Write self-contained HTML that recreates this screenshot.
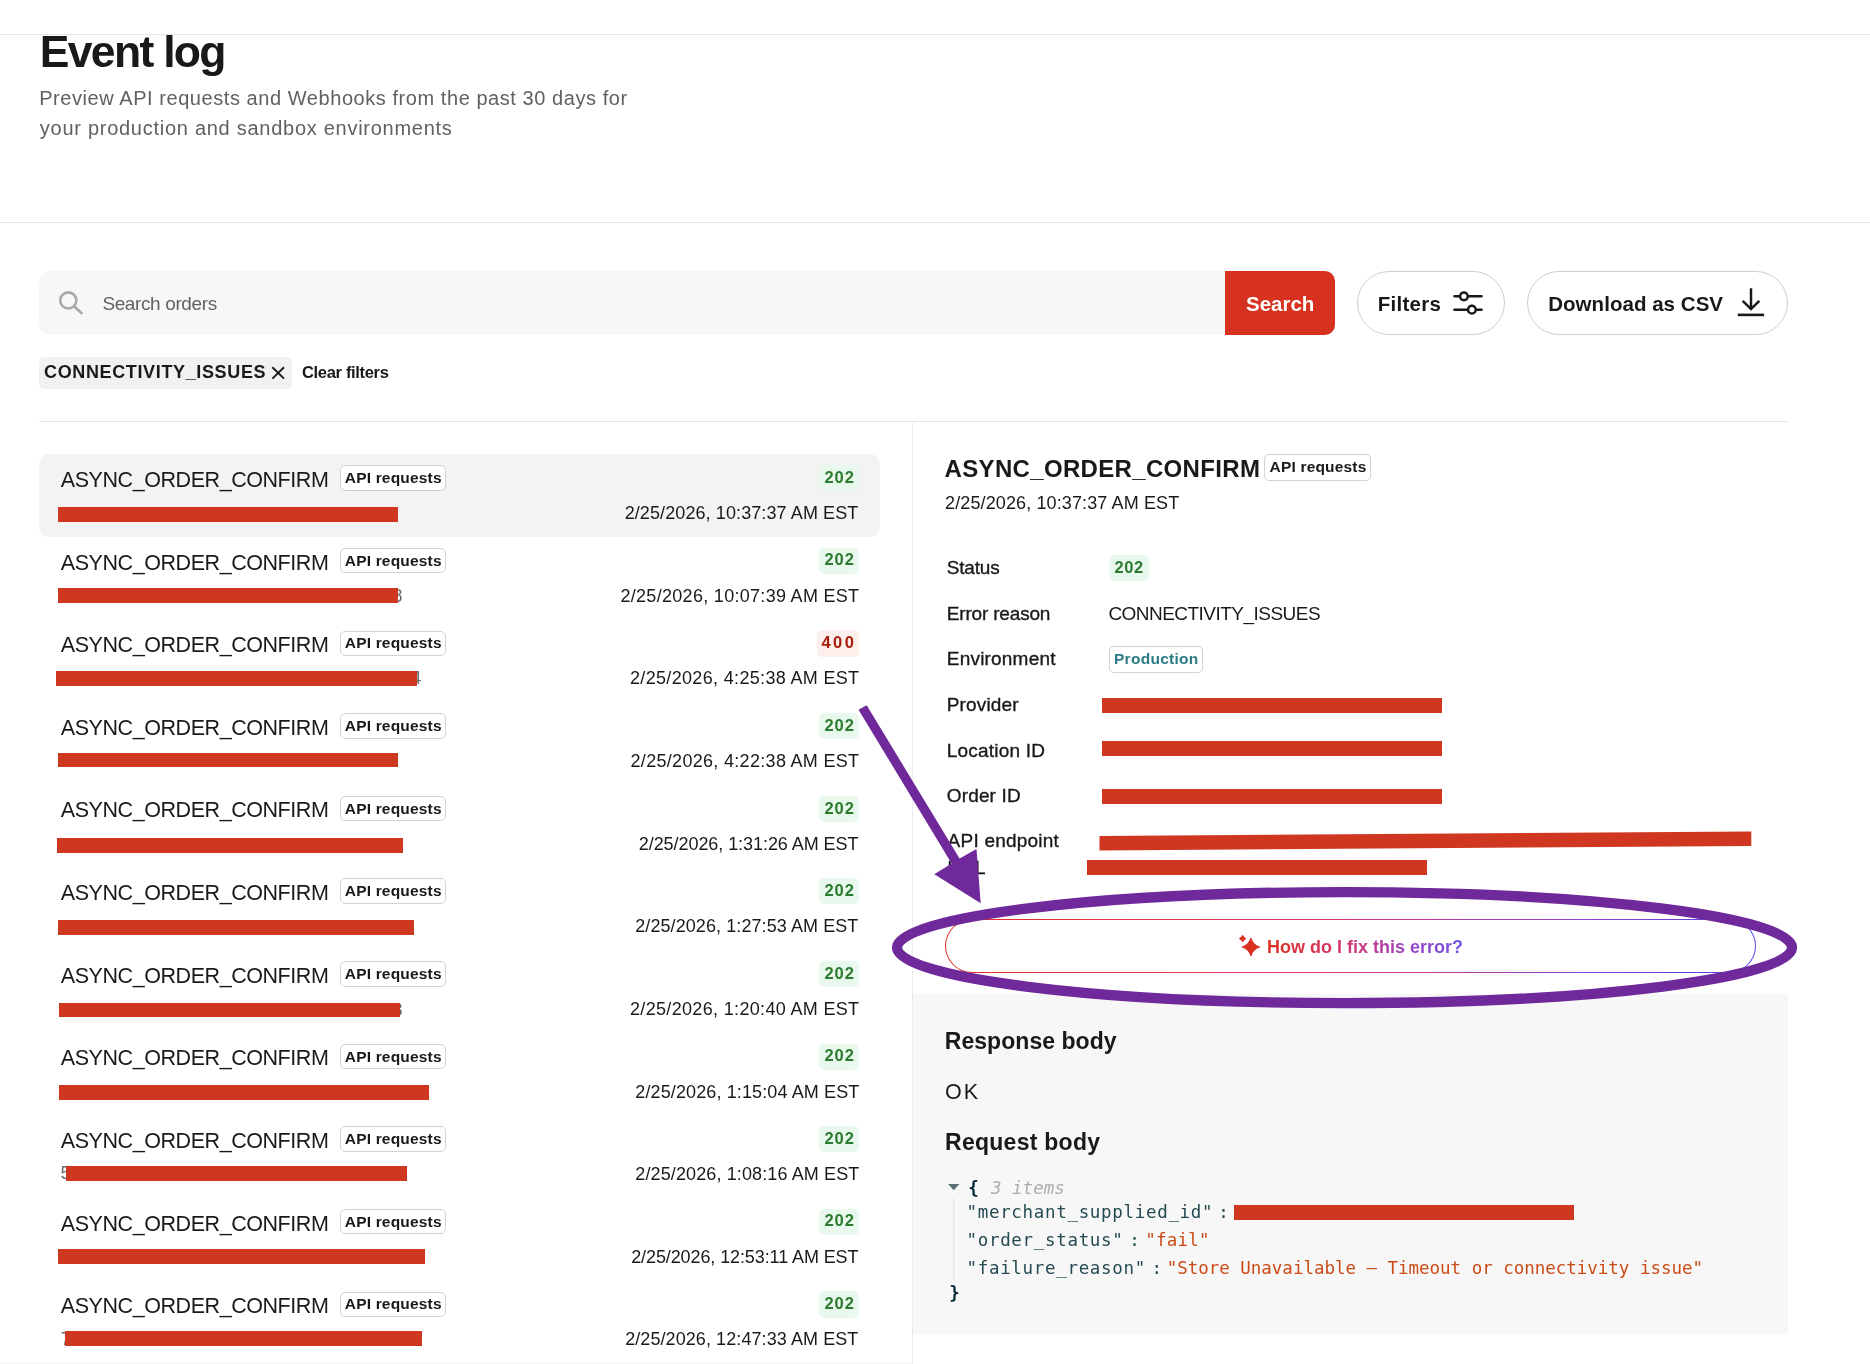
<!DOCTYPE html>
<html lang="en"><head><meta charset="utf-8"><title>Event log</title>
<style>
html,body{margin:0;padding:0;background:#fff;}
body{width:1870px;height:1364px;position:relative;overflow:hidden;font-family:"Liberation Sans", sans-serif;color:#191919;}
#pg{position:absolute;left:0;top:0;width:1870px;height:1364px;will-change:transform;}
.b{position:absolute;}
.t{position:absolute;white-space:nowrap;line-height:1;}
.m{position:absolute;white-space:pre;line-height:1;font-family:"DejaVu Sans Mono", "Liberation Mono", monospace;font-size:17.5px;}
svg{position:absolute;overflow:visible;}
</style></head><body><div id="pg">
<div class="t" style="right:1467.4px;top:586.6px;font-size:18.5px;color:#6b6b6b;">8</div>
<div class="t" style="right:1448.8px;top:669.3px;font-size:18.5px;color:#6b6b6b;">4</div>
<div class="t" style="right:1467.4px;top:1000.6px;font-size:18.5px;color:#6b6b6b;">8</div>
<div class="t" style="left:60.6px;top:1164.3px;font-size:18.5px;color:#6b6b6b;">5</div>
<div class="t" style="left:60.8px;top:1329.9px;font-size:18.5px;color:#6b6b6b;">7</div>
<div class="b" style="left:0.0px;top:34.0px;width:1870.0px;height:1.0px;background:#e7e7e7;"></div>
<div class="b" style="left:0.0px;top:222.0px;width:1870.0px;height:1.0px;background:#e4e4e4;"></div>
<div class="b" style="left:39.0px;top:421.0px;width:1749.0px;height:1.0px;background:#e4e4e4;"></div>
<div class="b" style="left:912.0px;top:421.0px;width:1.0px;height:943.0px;background:#ebebeb;"></div>
<div class="b" style="left:0.0px;top:1361.0px;width:912.0px;height:3.0px;background:linear-gradient(180deg,#ffffff 0%,#f4f4f4 100%);"></div>
<div class="b" style="left:39.0px;top:271.0px;width:1193.0px;height:64.0px;background:#f7f7f7;border-radius:10px 0 0 10px;"></div>
<div class="b" style="left:1225.0px;top:271.0px;width:110.0px;height:64.0px;background:#d6321f;border-radius:0 10px 10px 0;"></div>
<div class="b" style="left:1357.0px;top:271.0px;width:148.0px;height:64.0px;background:#fff;border:1px solid #cecece;box-sizing:border-box;border-radius:32px;"></div>
<div class="b" style="left:1527.0px;top:271.0px;width:261.0px;height:64.0px;background:#fff;border:1px solid #cecece;box-sizing:border-box;border-radius:32px;"></div>
<div class="b" style="left:39.0px;top:357.2px;width:253.0px;height:31.8px;background:#f1f1f1;border-radius:5px;"></div>
<div class="b" style="left:39.0px;top:454.2px;width:841.0px;height:82.5px;background:#f3f3f3;border-radius:10px;"></div>
<div class="b" style="left:340.3px;top:465.2px;width:105.3px;height:25.5px;background:#fff;border:1px solid #d2d2d2;box-sizing:border-box;border-radius:5px;"></div>
<div class="b" style="left:819.2px;top:465.1px;width:39.6px;height:26.2px;background:#e9f8ec;border-radius:5px;"></div>
<div class="b" style="left:58.0px;top:507.0px;width:340.0px;height:14.9px;background:#cf3721;"></div>
<div class="b" style="left:340.3px;top:547.8px;width:105.3px;height:25.5px;background:#fff;border:1px solid #d2d2d2;box-sizing:border-box;border-radius:5px;"></div>
<div class="b" style="left:819.2px;top:547.7px;width:39.6px;height:26.2px;background:#e9f8ec;border-radius:5px;"></div>
<div class="b" style="left:58.0px;top:588.2px;width:340.0px;height:14.6px;background:#cf3721;"></div>
<div class="b" style="left:340.3px;top:630.5px;width:105.3px;height:25.5px;background:#fff;border:1px solid #d2d2d2;box-sizing:border-box;border-radius:5px;"></div>
<div class="b" style="left:817.0px;top:630.4px;width:41.8px;height:26.2px;background:#fdefec;border-radius:5px;"></div>
<div class="b" style="left:56.0px;top:671.0px;width:361.3px;height:14.5px;background:#cf3721;"></div>
<div class="b" style="left:340.3px;top:713.1px;width:105.3px;height:25.5px;background:#fff;border:1px solid #d2d2d2;box-sizing:border-box;border-radius:5px;"></div>
<div class="b" style="left:819.2px;top:713.0px;width:39.6px;height:26.2px;background:#e9f8ec;border-radius:5px;"></div>
<div class="b" style="left:58.0px;top:752.5px;width:340.0px;height:14.0px;background:#cf3721;"></div>
<div class="b" style="left:340.3px;top:795.7px;width:105.3px;height:25.5px;background:#fff;border:1px solid #d2d2d2;box-sizing:border-box;border-radius:5px;"></div>
<div class="b" style="left:819.2px;top:795.6px;width:39.6px;height:26.2px;background:#e9f8ec;border-radius:5px;"></div>
<div class="b" style="left:57.0px;top:838.0px;width:345.5px;height:14.5px;background:#cf3721;"></div>
<div class="b" style="left:340.3px;top:878.3px;width:105.3px;height:25.5px;background:#fff;border:1px solid #d2d2d2;box-sizing:border-box;border-radius:5px;"></div>
<div class="b" style="left:819.2px;top:878.2px;width:39.6px;height:26.2px;background:#e9f8ec;border-radius:5px;"></div>
<div class="b" style="left:57.5px;top:920.0px;width:356.5px;height:15.0px;background:#cf3721;"></div>
<div class="b" style="left:340.3px;top:961.0px;width:105.3px;height:25.5px;background:#fff;border:1px solid #d2d2d2;box-sizing:border-box;border-radius:5px;"></div>
<div class="b" style="left:819.2px;top:960.9px;width:39.6px;height:26.2px;background:#e9f8ec;border-radius:5px;"></div>
<div class="b" style="left:59.0px;top:1002.5px;width:340.5px;height:14.0px;background:#cf3721;"></div>
<div class="b" style="left:340.3px;top:1043.6px;width:105.3px;height:25.5px;background:#fff;border:1px solid #d2d2d2;box-sizing:border-box;border-radius:5px;"></div>
<div class="b" style="left:819.2px;top:1043.5px;width:39.6px;height:26.2px;background:#e9f8ec;border-radius:5px;"></div>
<div class="b" style="left:58.5px;top:1085.0px;width:370.5px;height:15.0px;background:#cf3721;"></div>
<div class="b" style="left:340.3px;top:1126.2px;width:105.3px;height:25.5px;background:#fff;border:1px solid #d2d2d2;box-sizing:border-box;border-radius:5px;"></div>
<div class="b" style="left:819.2px;top:1126.1px;width:39.6px;height:26.2px;background:#e9f8ec;border-radius:5px;"></div>
<div class="b" style="left:66.0px;top:1166.0px;width:340.5px;height:14.5px;background:#cf3721;"></div>
<div class="b" style="left:340.3px;top:1208.9px;width:105.3px;height:25.5px;background:#fff;border:1px solid #d2d2d2;box-sizing:border-box;border-radius:5px;"></div>
<div class="b" style="left:819.2px;top:1208.8px;width:39.6px;height:26.2px;background:#e9f8ec;border-radius:5px;"></div>
<div class="b" style="left:57.5px;top:1248.6px;width:367.0px;height:15.6px;background:#cf3721;"></div>
<div class="b" style="left:340.3px;top:1291.5px;width:105.3px;height:25.5px;background:#fff;border:1px solid #d2d2d2;box-sizing:border-box;border-radius:5px;"></div>
<div class="b" style="left:819.2px;top:1291.4px;width:39.6px;height:26.2px;background:#e9f8ec;border-radius:5px;"></div>
<div class="b" style="left:64.5px;top:1331.0px;width:357.0px;height:14.5px;background:#cf3721;"></div>
<div class="b" style="left:1264.3px;top:454.2px;width:106.6px;height:26.5px;background:#fff;border:1px solid #d2d2d2;box-sizing:border-box;border-radius:5px;"></div>
<div class="b" style="left:1108.9px;top:555.1px;width:39.7px;height:25.6px;background:#e9f8ec;border-radius:5px;"></div>
<div class="b" style="left:1109.2px;top:646.3px;width:93.5px;height:26.4px;background:#fff;border:1px solid #d2d2d2;box-sizing:border-box;border-radius:5px;"></div>
<div class="b" style="left:1101.9px;top:698.1px;width:340.1px;height:14.8px;background:#cf3721;"></div>
<div class="b" style="left:1101.9px;top:741.2px;width:340.1px;height:14.8px;background:#cf3721;"></div>
<div class="b" style="left:1101.9px;top:789.1px;width:340.1px;height:14.8px;background:#cf3721;"></div>
<div class="b" style="left:1087.0px;top:860.3px;width:340.0px;height:14.6px;background:#cf3721;"></div>
<div class="b" style="left:913.0px;top:994.0px;width:874.6px;height:339.7px;background:#f7f7f7;"></div>
<div class="t" id="t0" style="top:29.95px;font-size:44.5px;left:39.80px;font-weight:700;letter-spacing:-1.69px;">Event log</div>
<div class="t" id="t1" style="top:88.07px;font-size:20.0px;left:39.20px;color:#606060;letter-spacing:0.56px;">Preview API requests and Webhooks from the past 30 days for</div>
<div class="t" id="t2" style="top:118.07px;font-size:20.0px;left:39.80px;color:#606060;letter-spacing:0.73px;">your production and sandbox environments</div>
<div class="t" id="t3" style="top:294.22px;font-size:19.0px;left:102.40px;color:#626262;letter-spacing:-0.38px;">Search orders</div>
<div class="t" id="t4" style="top:293.65px;font-size:20.5px;left:1246.00px;font-weight:700;color:#fff;">Search</div>
<div class="t" id="t5" style="top:293.65px;font-size:20.5px;left:1377.80px;font-weight:700;letter-spacing:0.25px;">Filters</div>
<div class="t" id="t6" style="top:293.65px;font-size:20.5px;left:1548.20px;font-weight:700;letter-spacing:0.04px;">Download as CSV</div>
<div class="t" id="t7" style="top:362.96px;font-size:18.0px;left:44.00px;font-weight:700;letter-spacing:0.64px;">CONNECTIVITY_ISSUES</div>
<div class="t" id="t8" style="top:363.93px;font-size:16.5px;left:302.00px;font-weight:700;letter-spacing:-0.33px;">Clear filters</div>
<div class="t" id="t9" style="top:470.14px;font-size:21.5px;left:60.80px;letter-spacing:-0.44px;">ASYNC_ORDER_CONFIRM</div>
<div class="t" id="t10" style="top:469.98px;font-size:15.5px;left:344.80px;font-weight:700;letter-spacing:0.18px;">API requests</div>
<div class="t" id="t11" style="top:468.93px;font-size:16.5px;left:824.40px;font-weight:700;color:#2b7a2f;letter-spacing:1.00px;">202</div>
<div class="t" id="t12" style="top:504.06px;font-size:18px;right:1011.60px;letter-spacing:0.10px;">2/25/2026, 10:37:37 AM EST</div>
<div class="t" id="t13" style="top:552.65px;font-size:21.5px;left:60.80px;letter-spacing:-0.44px;">ASYNC_ORDER_CONFIRM</div>
<div class="t" id="t14" style="top:552.61px;font-size:15.5px;left:344.80px;font-weight:700;letter-spacing:0.18px;">API requests</div>
<div class="t" id="t15" style="top:551.28px;font-size:16.5px;left:824.40px;font-weight:700;color:#2b7a2f;letter-spacing:1.00px;">202</div>
<div class="t" id="t16" style="top:586.69px;font-size:18px;right:1010.60px;letter-spacing:0.30px;">2/25/2026, 10:07:39 AM EST</div>
<div class="t" id="t17" style="top:634.89px;font-size:21.5px;left:60.80px;letter-spacing:-0.44px;">ASYNC_ORDER_CONFIRM</div>
<div class="t" id="t18" style="top:635.08px;font-size:15.5px;left:344.80px;font-weight:700;letter-spacing:0.18px;">API requests</div>
<div class="t" id="t19" style="top:634.19px;font-size:16.5px;left:821.40px;font-weight:700;color:#a8200d;letter-spacing:2.50px;">400</div>
<div class="t" id="t20" style="top:669.16px;font-size:18px;right:1010.60px;letter-spacing:0.33px;">2/25/2026, 4:25:38 AM EST</div>
<div class="t" id="t21" style="top:717.85px;font-size:21.5px;left:60.80px;letter-spacing:-0.44px;">ASYNC_ORDER_CONFIRM</div>
<div class="t" id="t22" style="top:717.87px;font-size:15.5px;left:344.80px;font-weight:700;letter-spacing:0.18px;">API requests</div>
<div class="t" id="t23" style="top:716.82px;font-size:16.5px;left:824.40px;font-weight:700;color:#2b7a2f;letter-spacing:1.00px;">202</div>
<div class="t" id="t24" style="top:751.95px;font-size:18px;right:1010.60px;letter-spacing:0.31px;">2/25/2026, 4:22:38 AM EST</div>
<div class="t" id="t25" style="top:800.10px;font-size:21.5px;left:60.80px;letter-spacing:-0.44px;">ASYNC_ORDER_CONFIRM</div>
<div class="t" id="t26" style="top:800.58px;font-size:15.5px;left:344.80px;font-weight:700;letter-spacing:0.18px;">API requests</div>
<div class="t" id="t27" style="top:799.53px;font-size:16.5px;left:824.40px;font-weight:700;color:#2b7a2f;letter-spacing:1.00px;">202</div>
<div class="t" id="t28" style="top:834.58px;font-size:18px;right:1011.60px;letter-spacing:-0.06px;">2/25/2026, 1:31:26 AM EST</div>
<div class="t" id="t29" style="top:882.69px;font-size:21.5px;left:60.80px;letter-spacing:-0.44px;">ASYNC_ORDER_CONFIRM</div>
<div class="t" id="t30" style="top:883.13px;font-size:15.5px;left:344.80px;font-weight:700;letter-spacing:0.18px;">API requests</div>
<div class="t" id="t31" style="top:882.08px;font-size:16.5px;left:824.40px;font-weight:700;color:#2b7a2f;letter-spacing:1.00px;">202</div>
<div class="t" id="t32" style="top:917.41px;font-size:18px;right:1011.60px;letter-spacing:0.08px;">2/25/2026, 1:27:53 AM EST</div>
<div class="t" id="t33" style="top:965.82px;font-size:21.5px;left:60.80px;letter-spacing:-0.44px;">ASYNC_ORDER_CONFIRM</div>
<div class="t" id="t34" style="top:965.76px;font-size:15.5px;left:344.80px;font-weight:700;letter-spacing:0.18px;">API requests</div>
<div class="t" id="t35" style="top:964.71px;font-size:16.5px;left:824.40px;font-weight:700;color:#2b7a2f;letter-spacing:1.00px;">202</div>
<div class="t" id="t36" style="top:999.84px;font-size:18px;right:1010.60px;letter-spacing:0.33px;">2/25/2026, 1:20:40 AM EST</div>
<div class="t" id="t37" style="top:1048.16px;font-size:21.5px;left:60.80px;letter-spacing:-0.44px;">ASYNC_ORDER_CONFIRM</div>
<div class="t" id="t38" style="top:1048.83px;font-size:15.5px;left:344.80px;font-weight:700;letter-spacing:0.18px;">API requests</div>
<div class="t" id="t39" style="top:1047.34px;font-size:16.5px;left:824.40px;font-weight:700;color:#2b7a2f;letter-spacing:1.00px;">202</div>
<div class="t" id="t40" style="top:1083.04px;font-size:18px;right:1010.60px;letter-spacing:0.12px;">2/25/2026, 1:15:04 AM EST</div>
<div class="t" id="t41" style="top:1131.24px;font-size:21.5px;left:60.80px;letter-spacing:-0.44px;">ASYNC_ORDER_CONFIRM</div>
<div class="t" id="t42" style="top:1131.02px;font-size:15.5px;left:344.80px;font-weight:700;letter-spacing:0.18px;">API requests</div>
<div class="t" id="t43" style="top:1129.97px;font-size:16.5px;left:824.40px;font-weight:700;color:#2b7a2f;letter-spacing:1.00px;">202</div>
<div class="t" id="t44" style="top:1165.10px;font-size:18px;right:1010.60px;letter-spacing:0.12px;">2/25/2026, 1:08:16 AM EST</div>
<div class="t" id="t45" style="top:1213.85px;font-size:21.5px;left:60.80px;letter-spacing:-0.44px;">ASYNC_ORDER_CONFIRM</div>
<div class="t" id="t46" style="top:1213.65px;font-size:15.5px;left:344.80px;font-weight:700;letter-spacing:0.18px;">API requests</div>
<div class="t" id="t47" style="top:1212.48px;font-size:16.5px;left:824.40px;font-weight:700;color:#2b7a2f;letter-spacing:1.00px;">202</div>
<div class="t" id="t48" style="top:1247.73px;font-size:18px;right:1011.60px;letter-spacing:-0.10px;">2/25/2026, 12:53:11 AM EST</div>
<div class="t" id="t49" style="top:1295.96px;font-size:21.5px;left:60.80px;letter-spacing:-0.44px;">ASYNC_ORDER_CONFIRM</div>
<div class="t" id="t50" style="top:1296.28px;font-size:15.5px;left:344.80px;font-weight:700;letter-spacing:0.18px;">API requests</div>
<div class="t" id="t51" style="top:1295.23px;font-size:16.5px;left:824.40px;font-weight:700;color:#2b7a2f;letter-spacing:1.00px;">202</div>
<div class="t" id="t52" style="top:1330.36px;font-size:18px;right:1011.60px;letter-spacing:0.08px;">2/25/2026, 12:47:33 AM EST</div>
<div class="t" id="t53" style="top:457.12px;font-size:24px;left:944.60px;font-weight:700;letter-spacing:0.33px;">ASYNC_ORDER_CONFIRM</div>
<div class="t" id="t54" style="top:458.78px;font-size:15.5px;left:1269.60px;font-weight:700;letter-spacing:0.18px;">API requests</div>
<div class="t" id="t55" style="top:493.86px;font-size:18px;left:945.00px;letter-spacing:0.12px;">2/25/2026, 10:37:37 AM EST</div>
<div class="t" id="t56" style="top:558.12px;font-size:19.0px;left:946.80px;letter-spacing:-0.20px;-webkit-text-stroke:0.35px #191919;">Status</div>
<div class="t" id="t57" style="top:603.82px;font-size:19.0px;left:946.80px;letter-spacing:-0.18px;-webkit-text-stroke:0.35px #191919;">Error reason</div>
<div class="t" id="t58" style="top:648.92px;font-size:19.0px;left:946.80px;letter-spacing:0.20px;-webkit-text-stroke:0.35px #191919;">Environment</div>
<div class="t" id="t59" style="top:694.92px;font-size:19.0px;left:946.80px;letter-spacing:0.14px;-webkit-text-stroke:0.35px #191919;">Provider</div>
<div class="t" id="t60" style="top:740.92px;font-size:19.0px;left:946.80px;letter-spacing:0.20px;-webkit-text-stroke:0.35px #191919;">Location ID</div>
<div class="t" id="t61" style="top:785.92px;font-size:19.0px;left:946.80px;letter-spacing:0.14px;-webkit-text-stroke:0.35px #191919;">Order ID</div>
<div class="t" id="t62" style="top:830.72px;font-size:19.0px;left:947.60px;letter-spacing:0.22px;-webkit-text-stroke:0.35px #191919;">API endpoint</div>
<div class="t" id="t63" style="top:857.92px;font-size:19.0px;left:947.40px;letter-spacing:0.10px;-webkit-text-stroke:0.35px #191919;">URL</div>
<div class="t" id="t64" style="top:558.93px;font-size:16.5px;left:1114.60px;font-weight:700;color:#2b7a2f;letter-spacing:0.50px;">202</div>
<div class="t" id="t65" style="top:604.12px;font-size:19.0px;left:1108.40px;letter-spacing:-0.53px;">CONNECTIVITY_ISSUES</div>
<div class="t" id="t66" style="top:651.08px;font-size:15.5px;left:1114.00px;font-weight:700;color:#2c7b85;letter-spacing:0.28px;">Production</div>
<div class="t" id="t67" style="top:1029.53px;font-size:23px;left:944.80px;font-weight:700;letter-spacing:0.04px;">Response body</div>
<div class="t" id="t68" style="top:1081.62px;font-size:21.5px;left:945.00px;letter-spacing:2.00px;">OK</div>
<div class="t" id="t69" style="top:1130.93px;font-size:23px;left:945.00px;font-weight:700;letter-spacing:0.27px;">Request body</div>
<!-- search icon -->
<svg style="left:0;top:0" width="1870" height="1364" viewBox="0 0 1870 1364" fill="none">
  <g stroke="#a8a8a8" stroke-width="2.6" stroke-linecap="round">
    <circle cx="68.3" cy="300.4" r="8.05"/>
    <path d="M74.1 306.2 L81.6 313.2"/>
  </g>
  <!-- filters icon -->
  <g stroke="#191919" stroke-width="2.6" stroke-linecap="round">
    <path d="M1454.5 296.3 H1459.2 M1468.8 296.3 H1481.5"/>
    <circle cx="1463.9" cy="296.3" r="3.85" stroke-width="2.5"/>
    <path d="M1454.5 309.7 H1467 M1476.8 309.7 H1481.5"/>
    <circle cx="1471.9" cy="309.7" r="3.85" stroke-width="2.5"/>
  </g>
  <!-- download icon -->
  <g stroke="#191919" stroke-width="2.5" stroke-linecap="butt" stroke-linejoin="miter">
    <path d="M1751 288.3 V309.1"/>
    <path d="M1742.7 300.8 L1751 309.1 L1759.3 300.8"/>
    <path d="M1737.8 314.9 H1764.1" stroke-width="2.6"/>
  </g>
  <!-- chip close X -->
  <g stroke="#191919" stroke-width="1.9" stroke-linecap="butt">
    <path d="M272.4 367.3 L284 378.6 M284 367.3 L272.4 378.6"/>
  </g>
  <!-- tilted red bar (API endpoint) -->
  <polygon points="1099.5,836 1751.3,831.4 1751.3,846.1 1099.5,850.4" fill="#cf3721"/>
</svg>

<!-- AI button -->
<div class="b" style="left:945px;top:918.8px;width:811px;height:54.1px;border-radius:27.05px;background:linear-gradient(90deg,#e0311f 0%,#d9336b 45%,#8a3fd0 80%,#4f46e5 100%);"></div>
<div class="b" style="left:946px;top:919.8px;width:809px;height:52.1px;border-radius:26.05px;background:#fff;"></div>
<svg style="left:0;top:0" width="1870" height="1364" viewBox="0 0 1870 1364">
  <g fill="#d9301f" stroke="#d9301f" stroke-width="0.9" stroke-linejoin="round">
  <path d="M1250.9 938.0 Q1253.04 944.84 1259.8000000000002 947.0 Q1253.04 949.16 1250.9 956.0 Q1248.76 949.16 1242.0 947.0 Q1248.76 944.84 1250.9 938.0 Z"/>
  <path d="M1242.6 935.3000000000001 Q1243.66 937.54 1245.8999999999999 938.6 Q1243.66 939.66 1242.6 941.9 Q1241.54 939.66 1239.3 938.6 Q1241.54 937.54 1242.6 935.3000000000001 Z"/>
  </g>
</svg>
<div class="t" id="aibtn" style="left:1267.1px;top:937.7px;font-size:18px;font-weight:700;letter-spacing:-0.01px;background:linear-gradient(90deg,#dc301f 0%,#d3356f 40%,#9b45c4 72%,#6f52e8 100%);-webkit-background-clip:text;background-clip:text;color:transparent;">How do I fix this error?</div>

<!-- JSON viewer -->
<svg style="left:0;top:0" width="1870" height="1364" viewBox="0 0 1870 1364">
  <polygon points="948.1,1184 959.4,1184 953.75,1190.3" fill="#586e75"/>
  <rect x="953.2" y="1198" width="1" height="84" fill="#e3e3e3"/>
</svg>
<div class="m" style="left:968.3px;top:1179.8999999999999px;font-weight:700;color:#002b36;">{</div>
<div class="m" style="left:991.0px;top:1179.8999999999999px;font-style:italic;color:#adadad;">3 items</div>
<div class="m" style="left:966.5px;top:1204.3px;color:#254a53;letter-spacing:0.68px;">"merchant_supplied_id"</div>
<div class="m" style="left:1218.2px;top:1204.3px;color:#254a53;">:</div>
<div class="b" style="left:1234px;top:1204.7px;width:340px;height:15.1px;background:#cf3721;"></div>
<div class="m" style="left:966.5px;top:1231.8999999999999px;color:#254a53;letter-spacing:0.68px;">"order_status"</div>
<div class="m" style="left:1129.3px;top:1231.8999999999999px;color:#254a53;">:</div>
<div class="m" style="left:1145.3px;top:1231.8999999999999px;color:#cb4b16;letter-spacing:0.2px;">"fail"</div>
<div class="m" style="left:966.5px;top:1260.1999999999998px;color:#254a53;letter-spacing:0.68px;">"failure_reason"</div>
<div class="m" style="left:1151.5px;top:1260.1999999999998px;color:#254a53;">:</div>
<div class="m" style="left:1166.7px;top:1260.1999999999998px;color:#cb4b16;letter-spacing:-0.02px;">"Store Unavailable – Timeout or connectivity issue"</div>
<div class="m" style="left:949.3px;top:1284.6px;font-weight:700;color:#002b36;">}</div>

<!-- annotation: arrow + ellipse -->
<svg style="left:0;top:0" width="1870" height="1364" viewBox="0 0 1870 1364">
  <polygon points="858.5,709.7 866.7,705.3 959.6,858.6 976.5,849 980.7,903.2 934.3,874.2 951.6,863.4" fill="#70299b"/>
  <ellipse cx="1344.5" cy="947.6" rx="447.5" ry="55.5" fill="none" stroke="#70299b" stroke-width="10.3"/>
</svg>
</div></body></html>
